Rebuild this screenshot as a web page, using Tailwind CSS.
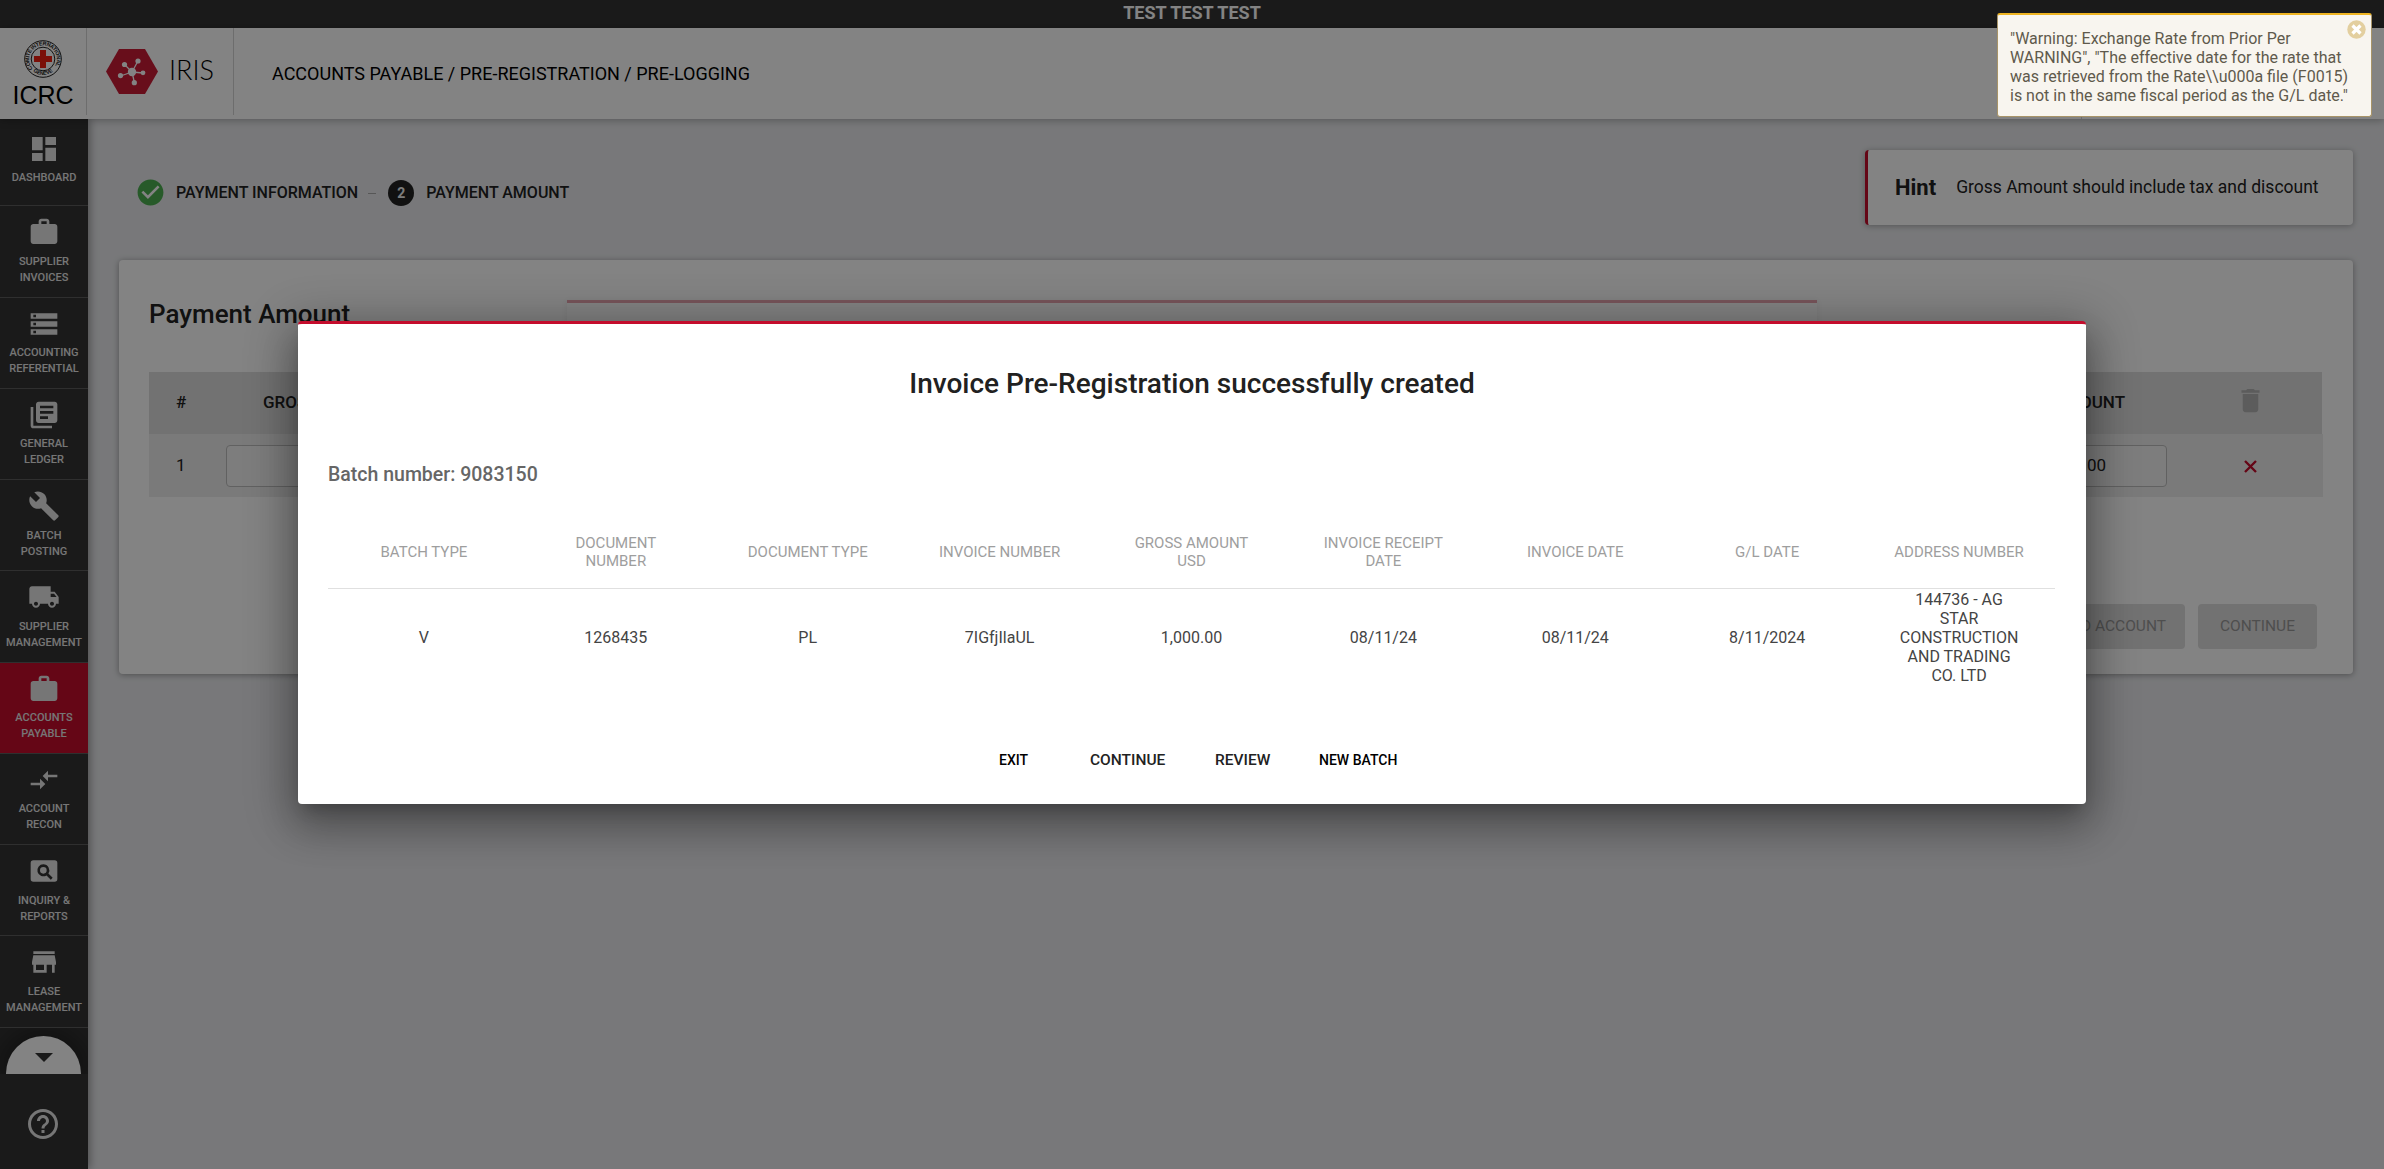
<!DOCTYPE html>
<html lang="en">
<head>
<meta charset="utf-8">
<title>IRIS</title>
<script src="https://cdn.jsdelivr.net/npm/@tailwindcss/browser@4"></script>
</head>
<body class="relative h-[1169px] w-[2384px] overflow-hidden bg-[#e9eaed] font-['Roboto',sans-serif] text-[#212121]">
<div class="flex h-full flex-col">
  <div class="flex h-7 shrink-0 items-center justify-center bg-[#333] pb-0.5 text-[18px] font-bold leading-6 text-white">TEST TEST TEST</div>
  <header class="relative z-10 flex h-[91px] shrink-0 items-start bg-white shadow-[0_1px_8px_rgba(0,0,0,.3)]">
    <div class="flex h-[87px] w-[87px] flex-col items-center border-r border-[#d4d4d4] pt-3">
      <svg class="h-[38px] w-[38px]" viewBox="0 0 38 38">
        <circle cx="19" cy="19" r="18.3" fill="none" stroke="#222" stroke-width="1"/>
        <circle cx="19" cy="19" r="11.8" fill="none" stroke="#222" stroke-width="1"/>
        <path id="up" d="M8.8 28.5A13.8 13.8 0 1 1 29.2 28.5" fill="none"/>
        <path id="lo" d="M8 30.6A16.2 16.2 0 0 0 30 30.6" fill="none"/>
        <text font-size="5.4" font-weight="700" font-family="Liberation Sans" fill="#222"><textPath href="#up" textLength="60">COMITÉ INTERNATIONAL</textPath></text>
        <text font-size="5.2" font-weight="700" font-family="Liberation Sans" fill="#222"><textPath href="#lo" startOffset="1.5" textLength="21">GENÈVE</textPath></text>
        <path d="M16 10h6v6h6v6h-6v6h-6v-6h-6v-6h6z" fill="#f02010"/>
      </svg>
      <div class="mt-[3px] font-['Liberation_Sans',sans-serif] text-[25px] leading-[28px] text-black">ICRC</div>
    </div>
    <div class="flex h-[87px] w-[147px] items-start border-r border-[#d4d4d4] pl-[19px] pt-[21px]">
      <svg class="h-[45px] w-[52px]" viewBox="0 0 52 45">
        <path d="M13 0h26l13 22.5L39 45H13L0 22.5z" fill="#cb1c36"/>
        <g stroke="#fff" stroke-width="1.3" fill="#fff"><path d="M26 23 18.500 15.500M26 23 32 12M26 23l11 1M26 23l2.500 11M26 23l-11.500 4"/><g stroke="none"><circle cx="26" cy="23" r="4.200"/><circle cx="18.500" cy="15.500" r="2.600"/><circle cx="32" cy="12" r="2.600"/><circle cx="37" cy="23.800" r="2.400"/><circle cx="28.300" cy="33.700" r="2.600"/><circle cx="14.500" cy="26.600" r="2.600"/></g></g>
      </svg>
      <span class="ml-[11px] mt-[6px] font-['Lato',sans-serif] text-[27px] font-light leading-[30px] text-black">IRIS</span>
    </div>
    <div class="pl-[38px] pt-[34px] text-[18px] leading-6 text-black">ACCOUNTS PAYABLE / PRE-REGISTRATION / PRE-LOGGING</div>
    <div class="ml-auto mr-[302px] h-full w-px bg-[#d4d4d4]"></div>
  </header>
  <div class="flex min-h-0 flex-1">
    <nav class="relative z-[5] flex w-[88px] shrink-0 flex-col bg-[#333] text-center text-[11px] font-medium leading-4 text-[#e6e6e6] shadow-[2px_0_8px_rgba(0,0,0,.35)]">
      <div class="flex h-[909px] shrink-0 flex-col">
      <a class="flex h-[87px] shrink-0 flex-col items-center border-b border-[#5c5c5c] pt-[14px]"><svg class="h-8 w-8" viewBox="0 0 24 24" fill="currentColor"><path d="M3 13h8V3H3v10zm0 8h8v-6H3v6zm10 0h8V11h-8v10zm0-18v6h8V3h-8z"/></svg><span class="mt-[5px]">DASHBOARD</span></a>
      <a class="flex h-[92px] shrink-0 flex-col items-center border-b border-[#5c5c5c] pt-[10px]"><svg class="h-8 w-8" viewBox="0 0 24 24" fill="currentColor"><path d="M20 6h-4V4c0-1.110-.890-2-2-2h-4c-1.110 0-2 .890-2 2v2H4c-1.110 0-1.990.890-1.990 2L2 19c0 1.110.890 2 2 2h16c1.110 0 2-.890 2-2V8c0-1.110-.890-2-2-2zm-6 0h-4V4h4v2z"/></svg><span class="mt-[6px]">SUPPLIER<br>INVOICES</span></a>
      <a class="flex h-[91px] shrink-0 flex-col items-center border-b border-[#5c5c5c] pt-[10px]"><svg class="h-8 w-8" viewBox="0 0 24 24" fill="currentColor"><path d="M2 20h20v-4H2v4zm2-3h2v2H4v-2zM2 4v4h20V4H2zm4 3H4V5h2v2zm-4 7h20v-4H2v4zm2-3h2v2H4v-2z"/></svg><span class="mt-[5px]">ACCOUNTING<br>REFERENTIAL</span></a>
      <a class="flex h-[91px] shrink-0 flex-col items-center border-b border-[#5c5c5c] pt-[10px]"><svg class="h-8 w-8" viewBox="0 0 24 24" fill="currentColor"><path d="M4 6H2v14c0 1.100.900 2 2 2h14v-2H4V6zm16-4H8c-1.100 0-2 .900-2 2v12c0 1.100.900 2 2 2h12c1.100 0 2-.900 2-2V4c0-1.100-.900-2-2-2zm-1 9H9V9h10v2zm-4 4H9v-2h6v2zm4-8H9V5h10v2z"/></svg><span class="mt-[5px]">GENERAL<br>LEDGER</span></a>
      <a class="flex h-[91px] shrink-0 flex-col items-center border-b border-[#5c5c5c] pt-[10px]"><svg class="h-8 w-8" viewBox="0 0 24 24" fill="currentColor"><path d="M22.700 19l-9.100-9.100c.900-2.300.400-5-1.500-6.900-2-2-5-2.400-7.400-1.300L9 6 6 9 1.600 4.700C.4 7.100.9 10.100 2.900 12.100c1.900 1.900 4.600 2.400 6.900 1.500l9.100 9.100c.400.400 1 .400 1.400 0l2.300-2.300c.500-.400.500-1.100.100-1.400z"/></svg><span class="mt-[6px]">BATCH<br>POSTING</span></a>
      <a class="flex h-[92px] shrink-0 flex-col items-center border-b border-[#5c5c5c] pt-[10px]"><svg class="h-8 w-8" viewBox="0 0 24 24" fill="currentColor"><path d="M20 8h-3V4H3c-1.100 0-2 .900-2 2v11h2c0 1.660 1.340 3 3 3s3-1.340 3-3h6c0 1.660 1.340 3 3 3s3-1.340 3-3h2v-5l-3-4zM6 18.500c-.830 0-1.500-.670-1.500-1.500s.670-1.500 1.500-1.500 1.500.670 1.500 1.500-.670 1.500-1.500 1.500zm13.500-9l1.960 2.500H17V9.500h2.500zm-1.500 9c-.830 0-1.500-.670-1.500-1.500s.670-1.500 1.500-1.500 1.500.670 1.500 1.500-.670 1.500-1.500 1.500z"/></svg><span class="mt-[6px]">SUPPLIER<br>MANAGEMENT</span></a>
      <a class="flex h-[91px] shrink-0 flex-col items-center border-b border-[#5c5c5c] bg-[#c40c2c] pt-[10px]"><svg class="h-8 w-8" viewBox="0 0 24 24" fill="currentColor"><path d="M20 6h-4V4c0-1.110-.890-2-2-2h-4c-1.110 0-2 .890-2 2v2H4c-1.110 0-1.990.890-1.990 2L2 19c0 1.110.890 2 2 2h16c1.110 0 2-.890 2-2V8c0-1.110-.890-2-2-2zm-6 0h-4V4h4v2z"/></svg><span class="mt-[5px]">ACCOUNTS<br>PAYABLE</span></a>
      <a class="flex h-[91px] shrink-0 flex-col items-center border-b border-[#5c5c5c] pt-[10px]"><svg class="h-8 w-8" viewBox="0 0 24 24" fill="currentColor"><path d="M9.010 14H2v2h7.010v3L13 15l-3.990-4v3zm5.980-1v-3H22V8h-7.010V5L11 9l3.990 4z"/></svg><span class="mt-[5px]">ACCOUNT<br>RECON</span></a>
      <a class="flex h-[91px] shrink-0 flex-col items-center border-b border-[#5c5c5c] pt-[10px]"><svg class="h-8 w-8" viewBox="0 0 24 24" fill="currentColor"><path fill-rule="evenodd" d="M4 4h16a2 2 0 0 1 2 2v12a2 2 0 0 1-2 2H4a2 2 0 0 1-2-2V6a2 2 0 0 1 2-2zM11.500 7a4.500 4.500 0 1 0 2.400 8.300l3.200 3.200 1.400-1.400-3.200-3.200A4.500 4.500 0 0 0 11.500 7zm0 2a2.500 2.500 0 1 1 0 5 2.500 2.500 0 0 1 0-5z"/></svg><span class="mt-[6px]">INQUIRY &amp;<br>REPORTS</span></a>
      <a class="flex h-[92px] shrink-0 flex-col items-center border-b border-[#5c5c5c] pt-[10px]"><svg class="h-8 w-8" viewBox="0 0 24 24" fill="currentColor"><path d="M20 4H4v2h16V4zm1 10v-2l-1-5H4l-1 5v2h1v6h10v-6h4v6h2v-6h1zm-9 4H6v-4h6v4z"/></svg><span class="mt-[6px]">LEASE<br>MANAGEMENT</span></a>
      </div>
      <div class="flex h-[46px] items-end overflow-hidden pl-1.5" style="margin-top:0">
        <div class="flex h-[38px] w-[75px] items-center justify-center rounded-t-full bg-white pt-[5px] shadow-[0_0_30px_8px_rgba(0,0,0,.4)]"><svg class="h-[9px] w-[18px]" viewBox="0 0 18 9"><path d="M0 0h18L9 9z" fill="#333"/></svg></div>
      </div>
      <div class="flex justify-center pr-[3px] pt-[32px]"><svg class="h-9 w-9" viewBox="0 0 24 24" fill="currentColor"><path d="M11 18h2v-2h-2v2zm1-16C6.480 2 2 6.480 2 12s4.480 10 10 10 10-4.480 10-10S17.520 2 12 2zm0 18c-4.410 0-8-3.590-8-8s3.590-8 8-8 8 3.590 8 8-3.590 8-8 8zm0-14c-2.210 0-4 1.790-4 4h2c0-1.100.900-2 2-2s2 .900 2 2c0 2-3 1.750-3 5h2c0-2.250 3-2.500 3-5 0-2.210-1.790-4-4-4z"/></svg></div>
    </nav>
    <main class="flex min-w-0 flex-1 flex-col pl-[31px] pr-[31px] pt-[31px]">
      <div class="flex h-[75px] items-start justify-between">
        <div class="flex items-center pl-[16px] pt-[27px] text-[16px] font-medium leading-8 text-[#222]">
          <svg class="-mt-0.5 h-[31px] w-[31px]" viewBox="0 0 24 24"><circle cx="12" cy="12" r="9" fill="#fff"/><path fill="#4caf50" d="M12 2C6.480 2 2 6.480 2 12s4.480 10 10 10 10-4.480 10-10S17.520 2 12 2zm-2 15l-5-5 1.410-1.410L10 14.170l7.590-7.590L19 8l-9 9z"/></svg>
          <span class="ml-[10px]">PAYMENT INFORMATION</span>
          <span class="ml-[10px] h-px w-[8px] bg-[#aaa]"></span>
          <span class="ml-[12px] flex h-[26px] w-[26px] items-center justify-center rounded-full bg-[#222] text-[14px] font-bold text-[#f2f2f2]">2</span>
          <span class="ml-[12px]">PAYMENT AMOUNT</span>
        </div>
        <div class="flex h-[75px] w-[488px] items-center rounded-sm border-l-[3px] border-[#c40c2c] bg-white pl-[27px] shadow-[0_1px_6px_rgba(0,0,0,.3)]">
          <b class="text-[22px] font-bold">Hint</b><span class="ml-[20px] text-[17.5px]">Gross Amount should include tax and discount</span>
        </div>
      </div>
      <section class="relative mt-[35px] h-[414px] rounded-sm bg-white shadow-[0_1px_6px_rgba(0,0,0,.35)]">
        <div class="absolute left-[448px] top-[40px] h-[60px] w-[1250px] border-t-[3px] border-[#e7a3b0] bg-white shadow-[0_1px_6px_rgba(0,0,0,.08)]"></div>
        <h2 class="pl-[30px] pt-[38px] text-[26px] font-medium leading-8">Payment Amount</h2>
        <div class="ml-[30px] mt-[42px] flex h-[62px] w-[2173px] items-center bg-[#dedede] text-[17px] font-medium">
          <span class="w-[64px] pl-[27px]">#</span><span class="ml-[50px]">GROSS AMOUNT</span>
          <span class="ml-auto mr-[110px]">AMOUNT</span>
          <svg class="mb-[5px] mr-[56px] h-[31px] w-[31px]" viewBox="0 0 24 24" fill="#b4b4b4"><path d="M6 19c0 1.100.900 2 2 2h8c1.100 0 2-.900 2-2V7H6v12zM19 4h-3.500l-1-1h-5l-1 1H5v2h14V4z"/></svg>
        </div>
        <div class="ml-[30px] flex h-[63px] w-[2174px] items-center bg-[#eee] text-[17px]">
          <span class="w-[77px] pl-[27px]">1</span>
          <div class="h-[42px] w-[300px] rounded border border-[#bdbdbd] bg-[#f3f3f3]"></div>
          <div class="ml-auto flex h-[42px] w-[240px] items-center justify-end rounded border border-[#bdbdbd] bg-[#f3f3f3] pr-[60px]">1,000.00</div>
          <svg class="ml-[77px] mr-[66px] mt-[1px] h-[13px] w-[13px]" viewBox="0 0 13 13"><path d="M1 1l11 11M12 1L1 12" stroke="#c40c2c" stroke-width="2.400"/></svg>
        </div>
        <div class="mr-9 mt-[107px] flex justify-end gap-[13px] text-[15.500px] text-[#999]">
          <div class="flex h-[45px] w-[200px] items-center justify-end rounded-sm bg-[#dedede] pr-[19px]">ADD ACCOUNT</div>
          <div class="flex h-[45px] w-[119px] items-center justify-center rounded-sm bg-[#dedede]">CONTINUE</div>
        </div>
      </section>
    </main>
  </div>
</div>

<div class="absolute inset-0 z-20 bg-black/[.486]"></div>

<div class="absolute left-[298px] top-[321px] z-30 flex h-[483px] w-[1788px] flex-col rounded-sm border-t-[3px] border-[#c40c2c] bg-white px-[30px] shadow-[0_11px_15px_-7px_rgba(0,0,0,.2),0_24px_38px_3px_rgba(0,0,0,.14),0_9px_46px_8px_rgba(0,0,0,.3)]">
  <h1 class="mt-[42px] text-center text-[28px] font-medium leading-9">Invoice Pre-Registration successfully created</h1>
  <div class="mt-[61px] text-[19.500px] font-medium leading-6 text-[#666]">Batch number: 9083150</div>
  <div class="mt-[29px] grid h-[73px] w-[1727px] grid-cols-9 items-center border-b border-[#e0e0e0] text-center text-[15px] leading-[18px] text-[#9e9e9e]">
    <div>BATCH TYPE</div><div>DOCUMENT<br>NUMBER</div><div>DOCUMENT TYPE</div><div>INVOICE NUMBER</div><div>GROSS AMOUNT<br>USD</div><div>INVOICE RECEIPT<br>DATE</div><div>INVOICE DATE</div><div>G/L DATE</div><div>ADDRESS NUMBER</div>
  </div>
  <div class="grid h-[97px] w-[1727px] grid-cols-9 items-center text-center text-[16px] leading-[19px] text-[#444]">
    <div>V</div><div>1268435</div><div>PL</div><div>7IGfjIlaUL</div><div>1,000.00</div><div>08/11/24</div><div>08/11/24</div><div>8/11/2024</div><div>144736 - AG<br>STAR<br>CONSTRUCTION<br>AND TRADING<br>CO. LTD</div>
  </div>
  <div class="mt-[62px] flex pl-[671px] leading-6 text-[15.500px] font-medium text-[#222]">
    <span class="w-[91px] text-[14px] text-black">EXIT</span><span class="w-[125px]">CONTINUE</span><span class="w-[104px]">REVIEW</span><span class="text-[14px] text-black">NEW BATCH</span>
  </div>
</div>

<div class="absolute left-[1997px] top-[13px] z-40 h-[104px] w-[375px] rounded-[3px] border border-t-2 border-[#a89468] border-t-[#eeb422] bg-[#f8f5ef] pl-3 pt-[14px] text-[16px] leading-[19px] text-[#5f5a4c]">
  "Warning: Exchange Rate from Prior Per<br>WARNING", "The effective date for the rate that<br>was retrieved from the Rate\\u000a file (F0015)<br>is not in the same fiscal period as the G/L date."
  <svg class="absolute right-[5px] top-[5px] h-[19px] w-[19px]" viewBox="0 0 19 19"><circle cx="9.500" cy="9.500" r="9.200" fill="#e3cf9f"/><path d="M5.500 5.500l8 8M13.500 5.500l-8 8" stroke="#fff" stroke-width="3.200"/></svg>
</div>
</body>
</html>
